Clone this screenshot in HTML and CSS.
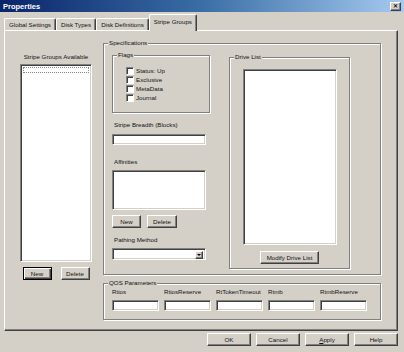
FILE: index.html
```html
<!DOCTYPE html>
<html lang="en">
<head>
  <meta charset="UTF-8">
  <title>Properties</title>
  <link rel="stylesheet" href="styles.css">
</head>
<body>
  <div class="window">
    <div class="titlebar">
      <span class="title">Properties</span>
      <span class="close">&#x2715;</span>
    </div>

    <div class="tabs">
      <div class="tab">Global Settings</div>
      <div class="tab">Disk Types</div>
      <div class="tab">Disk Definitions</div>
      <div class="tab active">Stripe Groups</div>
    </div>

    <div class="panel">
      <div class="groups-col">
        <div class="groups-label">Stripe Groups Available</div>
        <div class="sunken groups-list">
          <div class="focus-row"></div>
        </div>
        <div class="btn-row">
          <button class="btn default">New</button>
          <button class="btn">Delete</button>
        </div>
      </div>

      <div class="main-col">
        <fieldset class="etched spec">
          <legend>Specifications</legend>
          <div class="spec-inner">
            <div class="spec-left">
              <fieldset class="etched flags">
                <legend>Flags</legend>
                <div class="flags-inner">
                  <div class="check"><span class="cb"></span>Status: Up</div>
                  <div class="check"><span class="cb"></span>Exclusive</div>
                  <div class="check"><span class="cb"></span>MetaData</div>
                  <div class="check"><span class="cb"></span>Journal</div>
                </div>
              </fieldset>

              <div class="field-label first">Stripe Breadth (Blocks)</div>
              <div class="sunken textbox"></div>

              <div class="field-label">Affinities</div>
              <div class="sunken affinities"></div>

              <div class="aff-buttons">
                <button class="btn">New</button>
                <button class="btn">Delete</button>
              </div>

              <div class="field-label pathing">Pathing Method</div>
              <div class="sunken select">
                <span class="drop"><span class="arrow"></span></span>
              </div>
            </div>

            <fieldset class="etched drives">
              <legend>Drive List</legend>
              <div class="drives-inner">
                <div class="sunken drive-list"></div>
                <button class="btn modify">Modify Drive List</button>
              </div>
            </fieldset>
          </div>
        </fieldset>

        <fieldset class="etched qos">
          <legend>QOS Parameters</legend>
          <div class="qos-grid">
            <div class="qos-label">Rtios</div>
            <div class="qos-label">RtiosReserve</div>
            <div class="qos-label">RtTokenTimeout</div>
            <div class="qos-label">Rtmb</div>
            <div class="qos-label">RtmbReserve</div>
            <div class="sunken textbox"></div>
            <div class="sunken textbox"></div>
            <div class="sunken textbox"></div>
            <div class="sunken textbox"></div>
            <div class="sunken textbox"></div>
          </div>
        </fieldset>
      </div>
    </div>

    <div class="footer">
      <button class="btn dlg">OK</button>
      <button class="btn dlg">Cancel</button>
      <button class="btn dlg"><u>A</u>pply</button>
      <button class="btn dlg">Help</button>
    </div>
  </div>
</body>
</html>
```

FILE: styles.css
```css
* {
  margin: 0;
  padding: 0;
  box-sizing: border-box;
}

body {
  width: 404px;
  height: 352px;
  overflow: hidden;
  background: #d4d0c8;
  font-family: "Liberation Sans", Arial, sans-serif;
  font-size: 6.2px;
  color: #111;
}

.window {
  width: 404px;
  height: 352px;
}

/* title bar */
.titlebar {
  height: 12px;
  display: flex;
  align-items: center;
  justify-content: space-between;
  padding: 0 3px 0 3px;
  background: linear-gradient(to right, #0a246a, #3a6ea5 50%, #a6caf0);
}

.title {
  color: #fff;
  font-weight: bold;
  font-size: 7.5px;
}

.close {
  width: 11px;
  height: 9px;
  display: flex;
  align-items: center;
  justify-content: center;
  background: #d4d0c8;
  border: 1px solid;
  border-color: #fff #404040 #404040 #fff;
  box-shadow: inset -1px -1px 0 #808080;
  font-size: 6px;
  font-weight: bold;
  line-height: 1;
}

/* tabs */
.tabs {
  display: flex;
  align-items: flex-end;
  height: 17px;
  margin-top: 1px;
  padding-left: 4px;
  position: relative;
  z-index: 1;
}

.tab {
  height: 12px;
  line-height: 11px;
  padding: 0 4px;
  background: #d4d0c8;
  border: 1px solid;
  border-bottom: none;
  border-color: #fff #404040 #404040 #fff;
  border-radius: 2px 2px 0 0;
  box-shadow: inset -1px 0 0 #808080;
  white-space: nowrap;
}

.tab.active {
  height: 17px;
  line-height: 14px;
  padding: 0 4px;
  margin-bottom: -1px;
}

/* tab page */
.panel {
  margin-left: 4px;
  width: 394px;
  height: 301px;
  display: flex;
  padding: 8px 0 0 15px;
  border: 1px solid;
  border-color: #fff #404040 #404040 #fff;
  box-shadow: inset -1px -1px 0 #808080;
}

.groups-col {
  width: 72px;
  margin-top: 14px;
  display: flex;
  flex-direction: column;
}

.groups-label {
  height: 8px;
  line-height: 8px;
  text-align: center;
  margin-bottom: 3px;
  white-space: nowrap;
}

.sunken {
  background: #fff;
  border: 1px solid;
  border-color: #808080 #fff #fff #808080;
  box-shadow: inset 1px 1px 0 #404040, inset -1px -1px 0 #d4d0c8;
}

.groups-list {
  height: 198px;
  padding: 2px;
}

.focus-row {
  height: 6px;
  border: 1px dotted #888;
}

.btn-row {
  display: flex;
  justify-content: center;
  gap: 9px;
  margin-top: 5px;
}

.btn {
  height: 13px;
  background: #d4d0c8;
  border: 1px solid;
  border-color: #fff #404040 #404040 #fff;
  box-shadow: inset -1px -1px 0 #808080;
  font-family: inherit;
  font-size: 6.2px;
  color: #111;
  width: 29px;
}

.btn.default {
  border-color: #000;
  box-shadow: inset 1px 1px 0 #fff, inset -1px -1px 0 #404040, inset -2px -2px 0 #808080;
}

/* right side */
.main-col {
  margin-left: 11px;
  width: 278px;
  display: flex;
  flex-direction: column;
}

.etched {
  border: 1px solid #808080;
  box-shadow: 1px 1px 0 #fff, inset 1px 1px 0 #fff;
  min-width: 0;
}

.etched legend {
  margin-left: 4px;
  padding: 0 1px;
  height: 8px;
  line-height: 8px;
  background: #d4d0c8;
}

.spec {
  height: 236px;
}

.spec-inner {
  display: flex;
  padding: 4px 0 0 8px;
}

.spec-left {
  width: 98px;
  display: flex;
  flex-direction: column;
}

.flags {
  height: 62px;
}

.flags-inner {
  padding: 7px 0 0 13px;
}

.check {
  height: 9px;
  display: flex;
  align-items: center;
  gap: 2px;
}

.cb {
  width: 8px;
  height: 8px;
  background: #fff;
  border: 1px solid;
  border-color: #808080 #fff #fff #808080;
  box-shadow: inset 1px 1px 0 #404040;
}

.field-label {
  height: 8px;
  line-height: 8px;
  margin: 13px 0 4px 2px;
}

.field-label.first {
  margin-top: 8px;
  margin-bottom: 5px;
}

.field-label.pathing {
  margin-top: 8px;
}

.textbox {
  width: 94px;
  height: 11px;
}

.affinities {
  width: 94px;
  height: 40px;
}

.aff-buttons {
  display: flex;
  gap: 6px;
  margin-top: 5px;
}

.aff-buttons .btn:last-child {
  width: 30px;
}

.select {
  width: 94px;
  height: 12px;
  display: flex;
  justify-content: flex-end;
  padding: 2px;
}

.drop {
  width: 8px;
  height: 8px;
  display: flex;
  align-items: center;
  justify-content: center;
  background: #d4d0c8;
  border: 1px solid;
  border-color: #fff #404040 #404040 #fff;
  box-shadow: inset -1px -1px 0 #808080;
}

.arrow {
  width: 0;
  height: 0;
  border-left: 2px solid transparent;
  border-right: 2px solid transparent;
  border-top: 2px solid #000;
}

.drives {
  margin: 2px 0 0 19px;
  width: 121px;
  height: 216px;
}

.drives-inner {
  display: flex;
  flex-direction: column;
  align-items: center;
  padding-top: 8px;
}

.drive-list {
  width: 94px;
  height: 176px;
}

.btn.modify {
  width: 59px;
  margin-top: 6px;
}

/* QOS */
.qos {
  margin-top: 4px;
  height: 41px;
}

.qos-grid {
  display: grid;
  grid-template-columns: repeat(5, 47px);
  column-gap: 5px;
  row-gap: 4px;
  padding: 1px 0 0 8px;
}

.qos-label {
  height: 8px;
  line-height: 8px;
  white-space: nowrap;
}

.qos .textbox {
  width: 47px;
}

/* dialog buttons */
.footer {
  display: flex;
  justify-content: flex-end;
  gap: 5px;
  margin-top: 2px;
  padding-right: 6px;
}

.btn.dlg {
  width: 44px;
}
```
